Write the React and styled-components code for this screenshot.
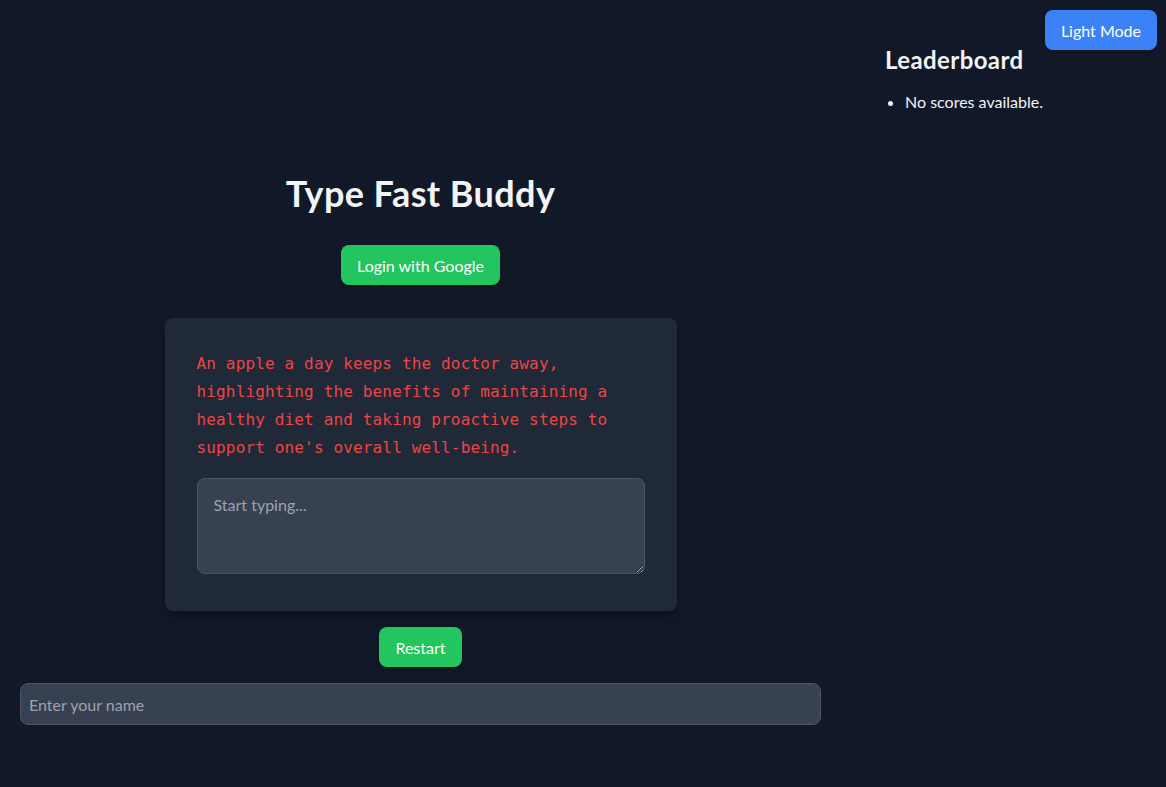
import React from "react";
import styled, { createGlobalStyle } from "styled-components";

const Global = createGlobalStyle`
  html, body { margin: 0; padding: 0; background: #111827; }
  body { font-family: "Segoe UI", Lato, "Noto Sans", sans-serif; color: #f3f4f6; }
  * { box-sizing: border-box; }
`;

const Page = styled.div`
  min-height: 787px;
  background: #111827;
  display: flex;
  padding: 20px;
  position: relative;
`;

const Main = styled.main`
  flex: 1;
  display: flex;
  flex-direction: column;
  align-items: center;
  padding-top: 153px;
`;

const Title = styled.h1`
  margin: 0 0 32px;
  font-size: 36px;
  line-height: 40px;
  font-weight: 700;
  letter-spacing: 0.4px;
  color: #f3f4f6;
`;

const Button = styled.button`
  border: none;
  border-radius: 8px;
  height: 40px;
  padding: 0 16px;
  font-family: inherit;
  font-size: 16px;
  color: #ffffff;
  background: ${p => (p.$blue ? "#3b82f6" : "#22c55e")};
  box-shadow: 0 4px 6px -1px rgba(0,0,0,0.1), 0 2px 4px -2px rgba(0,0,0,0.1);
  cursor: pointer;
`;

const Card = styled.section`
  margin-top: 33px;
  width: 512px;
  background: #1f2937;
  border-radius: 8px;
  padding: 32px 32px 37px;
  box-shadow: 0 10px 15px -3px rgba(0,0,0,0.25), 0 4px 6px -4px rgba(0,0,0,0.25);
`;

const Passage = styled.p`
  margin: 0 0 16px;
  font-family: "DejaVu Sans Mono", "Liberation Mono", monospace;
  font-size: 16px;
  line-height: 28px;
  letter-spacing: 0.15px;
  color: #ef4444;
`;

const TypeArea = styled.textarea`
  display: block;
  width: 100%;
  height: 96px;
  background: #374151;
  border: 1px solid #4b5563;
  border-radius: 8px;
  padding: 16px;
  font-family: inherit;
  font-size: 16px;
  color: #f3f4f6;
  resize: vertical;
  outline: none;
  &::placeholder { color: #9ca3af; }
`;

const RestartRow = styled.div`
  margin-top: 16px;
`;

const NameInput = styled.input`
  margin-top: 16px;
  width: 100%;
  height: 42px;
  background: #374151;
  border: 1px solid #4b5563;
  border-radius: 8px;
  padding: 0 8px;
  font-family: inherit;
  font-size: 16px;
  color: #f3f4f6;
  outline: none;
  &::placeholder { color: #9ca3af; }
`;

const Side = styled.aside`
  width: 261px;
  margin-left: 64px;
  padding-top: 24px;
`;

const SideTitle = styled.h2`
  margin: 0 0 14px;
  font-size: 24px;
  line-height: 32px;
  font-weight: 700;
  letter-spacing: 0.4px;
  color: #f3f4f6;
`;

const List = styled.ul`
  margin: 0;
  padding-left: 20px;
  font-size: 16px;
  line-height: 24px;
  color: #f3f4f6;
`;

const ModeToggle = styled(Button)`
  position: absolute;
  top: 10px;
  right: 9px;
`;

export default function App() {
  return (
    <>
      <Global />
      <Page>
        <Main>
          <Title>Type Fast Buddy</Title>
          <Button>Login with Google</Button>
          <Card>
            <Passage>
              An apple a day keeps the doctor away, highlighting the benefits of maintaining a healthy diet and taking proactive steps to support one's overall well-being.
            </Passage>
            <TypeArea placeholder="Start typing..." />
          </Card>
          <RestartRow>
            <Button>Restart</Button>
          </RestartRow>
          <NameInput placeholder="Enter your name" />
        </Main>
        <Side>
          <SideTitle>Leaderboard</SideTitle>
          <List>
            <li>No scores available.</li>
          </List>
        </Side>
        <ModeToggle $blue>Light Mode</ModeToggle>
      </Page>
    </>
  );
}
